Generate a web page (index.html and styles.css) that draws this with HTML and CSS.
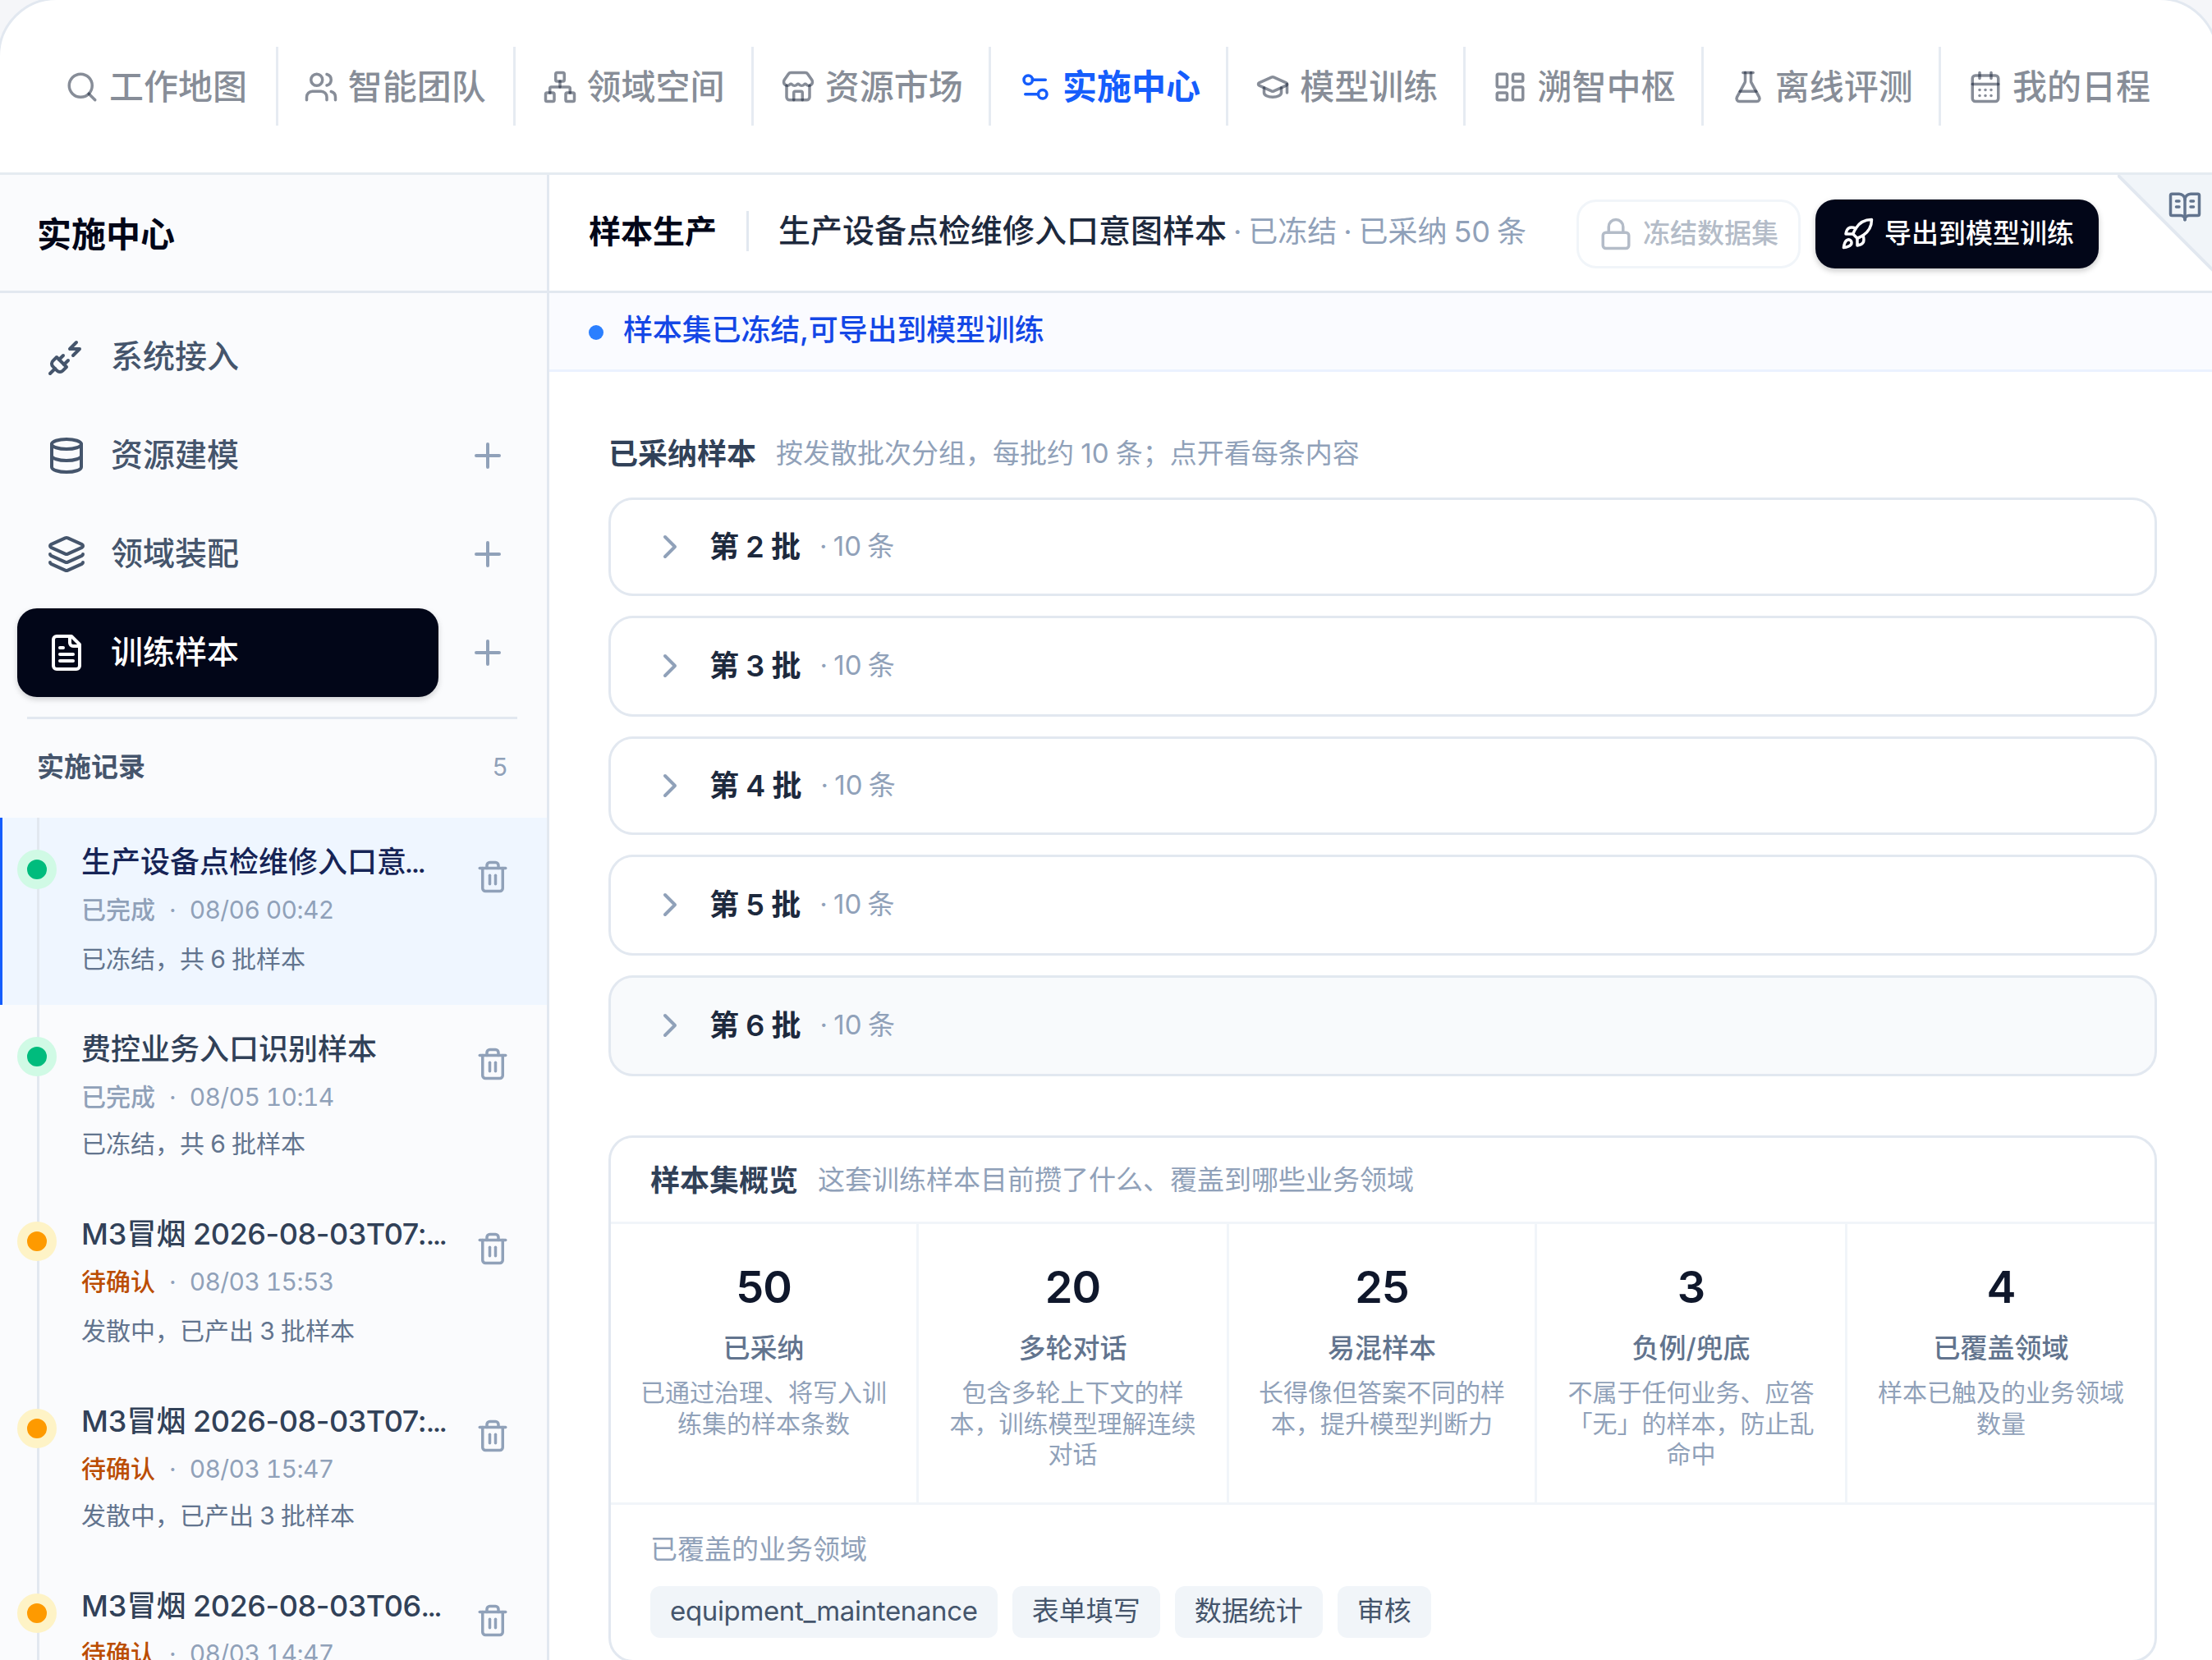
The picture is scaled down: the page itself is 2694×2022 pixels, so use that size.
FILE: index.html
```html
<!DOCTYPE html>
<html lang="zh-CN">
<head>
<meta charset="utf-8">
<title>实施中心</title>
<link rel="stylesheet" href="styles.css">
</head>
<body>
<svg class="sprite" width="0" height="0">
  <symbol id="search" viewBox="0 0 24 24"><path d="m21 21-4.34-4.34"/><circle cx="11" cy="11" r="8"/></symbol>
  <symbol id="users" viewBox="0 0 24 24"><path d="M16 21v-2a4 4 0 0 0-4-4H6a4 4 0 0 0-4 4v2"/><path d="M16 3.128a4 4 0 0 1 0 7.744"/><path d="M22 21v-2a4 4 0 0 0-3-3.87"/><circle cx="9" cy="7" r="4"/></symbol>
  <symbol id="network" viewBox="0 0 24 24"><rect x="16" y="16" width="6" height="6" rx="1"/><rect x="2" y="16" width="6" height="6" rx="1"/><rect x="9" y="2" width="6" height="6" rx="1"/><path d="M5 16v-3a1 1 0 0 1 1-1h12a1 1 0 0 1 1 1v3"/><path d="M12 12V8"/></symbol>
  <symbol id="store" viewBox="0 0 24 24"><path d="M15 21v-5a1 1 0 0 0-1-1h-4a1 1 0 0 0-1 1v5"/><path d="M17.774 10.31a1.12 1.12 0 0 0-1.549 0 2.5 2.5 0 0 1-3.451 0 1.12 1.12 0 0 0-1.548 0 2.5 2.5 0 0 1-3.452 0 1.12 1.12 0 0 0-1.549 0 2.5 2.5 0 0 1-3.77-3.248l2.889-4.184A2 2 0 0 1 7 2h10a2 2 0 0 1 1.653.873l2.895 4.192a2.5 2.5 0 0 1-3.774 3.244"/><path d="M4 10.95V19a2 2 0 0 0 2 2h12a2 2 0 0 0 2-2v-8.05"/></symbol>
  <symbol id="settings" viewBox="0 0 24 24"><path d="M14 17H5"/><path d="M19 7h-9"/><circle cx="17" cy="17" r="3"/><circle cx="7" cy="7" r="3"/></symbol>
  <symbol id="cap" viewBox="0 0 24 24"><path d="M21.42 10.922a1 1 0 0 0-.019-1.838L12.83 5.18a2 2 0 0 0-1.66 0L2.6 9.08a1 1 0 0 0 0 1.832l8.57 3.908a2 2 0 0 0 1.66 0z"/><path d="M22 10v6"/><path d="M6 12.5V16a6 3 0 0 0 12 0v-3.5"/></symbol>
  <symbol id="dashboard" viewBox="0 0 24 24"><rect x="3" y="3" width="7" height="9" rx="1"/><rect x="14" y="3" width="7" height="5" rx="1"/><rect x="14" y="12" width="7" height="9" rx="1"/><rect x="3" y="16" width="7" height="5" rx="1"/></symbol>
  <symbol id="flask" viewBox="0 0 24 24"><path d="M14 2v6a2 2 0 0 0 .245.96l5.51 10.08A2 2 0 0 1 18 22H6a2 2 0 0 1-1.755-2.96l5.51-10.08A2 2 0 0 0 10 8V2"/><path d="M6.453 15h11.094"/><path d="M8.5 2h7"/></symbol>
  <symbol id="calendar" viewBox="0 0 24 24"><path d="M8 2v4"/><path d="M16 2v4"/><rect x="3" y="4" width="18" height="18" rx="2"/><path d="M3 10h18"/><path d="M8 14h.01"/><path d="M12 14h.01"/><path d="M16 14h.01"/><path d="M8 18h.01"/><path d="M12 18h.01"/><path d="M16 18h.01"/></symbol>
  <symbol id="lock" viewBox="0 0 24 24"><rect x="3" y="11" width="18" height="11" rx="2"/><path d="M7 11V7a5 5 0 0 1 10 0v4"/></symbol>
  <symbol id="rocket" viewBox="0 0 24 24"><path d="M4.5 16.5c-1.5 1.26-2 5-2 5s3.74-.5 5-2c.71-.84.7-2.13-.09-2.91a2.18 2.18 0 0 0-2.91-.09z"/><path d="m12 15-3-3a22 22 0 0 1 2-3.95A12.88 12.88 0 0 1 22 2c0 2.72-.78 7.5-6 11a22.35 22.35 0 0 1-4 2z"/><path d="M9 12H4s.55-3.03 2-4c1.62-1.08 5 0 5 0"/><path d="M12 15v5s3.03-.55 4-2c1.08-1.62 0-5 0-5"/></symbol>
  <symbol id="book" viewBox="0 0 24 24"><path d="M12 7v14"/><path d="M16 12h2"/><path d="M16 8h2"/><path d="M3 18a1 1 0 0 1-1-1V4a1 1 0 0 1 1-1h5a4 4 0 0 1 4 4 4 4 0 0 1 4-4h5a1 1 0 0 1 1 1v13a1 1 0 0 1-1 1h-6a3 3 0 0 0-3 3 3 3 0 0 0-3-3z"/><path d="M6 12h2"/><path d="M6 8h2"/></symbol>
  <symbol id="plug" viewBox="0 0 24 24"><path d="M6.3 20.3a2.4 2.4 0 0 0 3.4 0L12 18l-6-6-2.3 2.3a2.4 2.4 0 0 0 0 3.4Z"/><path d="m2 22 3-3"/><path d="M7.5 13.5 10 11"/><path d="M10.5 16.5 13 14"/><path d="m18 3-4 4h6l-4 4"/></symbol>
  <symbol id="database" viewBox="0 0 24 24"><ellipse cx="12" cy="5" rx="9" ry="3"/><path d="M3 5v14a9 3 0 0 0 18 0V5"/><path d="M3 12a9 3 0 0 0 18 0"/></symbol>
  <symbol id="layers" viewBox="0 0 24 24"><path d="M12.83 2.18a2 2 0 0 0-1.66 0L2.6 6.08a1 1 0 0 0 0 1.83l8.58 3.91a2 2 0 0 0 1.66 0l8.58-3.9a1 1 0 0 0 0-1.83z"/><path d="M2 12a1 1 0 0 0 .58.91l8.6 3.91a2 2 0 0 0 1.65 0l8.58-3.9A1 1 0 0 0 22 12"/><path d="M2 17a1 1 0 0 0 .58.91l8.6 3.91a2 2 0 0 0 1.65 0l8.58-3.9A1 1 0 0 0 22 17"/></symbol>
  <symbol id="file" viewBox="0 0 24 24"><path d="M15 2H6a2 2 0 0 0-2 2v16a2 2 0 0 0 2 2h12a2 2 0 0 0 2-2V7Z"/><path d="M14 2v4a2 2 0 0 0 2 2h4"/><path d="M10 9H8"/><path d="M16 13H8"/><path d="M16 17H8"/></symbol>
  <symbol id="plus" viewBox="0 0 24 24"><path d="M5 12h14"/><path d="M12 5v14"/></symbol>
  <symbol id="chevron" viewBox="0 0 24 24"><path d="m9 18 6-6-6-6"/></symbol>
  <symbol id="trash" viewBox="0 0 24 24"><path d="M10 11v6"/><path d="M14 11v6"/><path d="M19 6v14a2 2 0 0 1-2 2H7a2 2 0 0 1-2-2V6"/><path d="M3 6h18"/><path d="M8 6V4a2 2 0 0 1 2-2h4a2 2 0 0 1 2 2v2"/></symbol>
</svg>

<div class="window">
  <nav class="tabs">
    <a class="tab"><svg class="icon"><use href="#search"/></svg>工作地图</a>
    <a class="tab"><svg class="icon"><use href="#users"/></svg>智能团队</a>
    <a class="tab"><svg class="icon"><use href="#network"/></svg>领域空间</a>
    <a class="tab"><svg class="icon"><use href="#store"/></svg>资源市场</a>
    <a class="tab active"><svg class="icon"><use href="#settings"/></svg>实施中心</a>
    <a class="tab"><svg class="icon"><use href="#cap"/></svg>模型训练</a>
    <a class="tab"><svg class="icon"><use href="#dashboard"/></svg>溯智中枢</a>
    <a class="tab"><svg class="icon"><use href="#flask"/></svg>离线评测</a>
    <a class="tab"><svg class="icon"><use href="#calendar"/></svg>我的日程</a>
  </nav>

  <div class="body">
    <aside class="sidebar">
      <h1 class="side-title">实施中心</h1>
      <ul class="menu">
        <li class="menu-row"><a class="menu-item"><svg class="icon lg"><use href="#plug"/></svg>系统接入</a></li>
        <li class="menu-row"><a class="menu-item"><svg class="icon lg"><use href="#database"/></svg>资源建模</a><button class="add"><svg class="icon lg"><use href="#plus"/></svg></button></li>
        <li class="menu-row"><a class="menu-item"><svg class="icon lg"><use href="#layers"/></svg>领域装配</a><button class="add"><svg class="icon lg"><use href="#plus"/></svg></button></li>
        <li class="menu-row"><a class="menu-item active"><svg class="icon lg"><use href="#file"/></svg>训练样本</a><button class="add"><svg class="icon lg"><use href="#plus"/></svg></button></li>
      </ul>
      <div class="records-head"><span>实施记录</span><span class="count">5</span></div>
      <ol class="records">
        <li class="record selected done">
          <i class="dot"></i>
          <div class="record-text">
            <p class="name">生产设备点检维修入口意<span class="more">…</span></p>
            <p class="meta"><b>已完成</b><span>·</span><span class="time">08/06 00:42</span></p>
            <p class="note">已冻结，共 6 批样本</p>
          </div>
          <svg class="icon trash"><use href="#trash"/></svg>
        </li>
        <li class="record done">
          <i class="dot"></i>
          <div class="record-text">
            <p class="name">费控业务入口识别样本</p>
            <p class="meta"><b>已完成</b><span>·</span><span class="time">08/05 10:14</span></p>
            <p class="note">已冻结，共 6 批样本</p>
          </div>
          <svg class="icon trash"><use href="#trash"/></svg>
        </li>
        <li class="record pending">
          <i class="dot"></i>
          <div class="record-text">
            <p class="name">M3冒烟 <span class="stamp">2026-08-03T07:</span><span class="more">…</span></p>
            <p class="meta"><b>待确认</b><span>·</span><span class="time">08/03 15:53</span></p>
            <p class="note">发散中，已产出 3 批样本</p>
          </div>
          <svg class="icon trash"><use href="#trash"/></svg>
        </li>
        <li class="record pending">
          <i class="dot"></i>
          <div class="record-text">
            <p class="name">M3冒烟 <span class="stamp">2026-08-03T07:</span><span class="more">…</span></p>
            <p class="meta"><b>待确认</b><span>·</span><span class="time">08/03 15:47</span></p>
            <p class="note">发散中，已产出 3 批样本</p>
          </div>
          <svg class="icon trash"><use href="#trash"/></svg>
        </li>
        <li class="record pending">
          <i class="dot"></i>
          <div class="record-text">
            <p class="name">M3冒烟 <span class="stamp">2026-08-03T06</span><span class="more">…</span></p>
            <p class="meta"><b>待确认</b><span>·</span><span class="time">08/03 14:47</span></p>
          </div>
          <svg class="icon trash"><use href="#trash"/></svg>
        </li>
      </ol>
    </aside>

    <main class="main">
      <header class="page-head">
        <h2 class="page-title">样本生产</h2>
        <p class="page-sub"><strong>生产设备点检维修入口意图样本</strong><span> · 已冻结 · 已采纳 50 条</span></p>
        <button class="btn ghost"><svg class="icon"><use href="#lock"/></svg>冻结数据集</button>
        <button class="btn solid"><svg class="icon"><use href="#rocket"/></svg>导出到模型训练</button>
        <div class="fold">
          <svg class="fold-shape" viewBox="0 0 120 120"><path class="fold-fill" d="M0 0H120V120Z"/><path class="fold-edge" d="M0 0 120 120"/></svg>
          <svg class="icon fold-icon"><use href="#book"/></svg>
        </div>
      </header>
      <div class="banner"><i class="banner-dot"></i>样本集已冻结,可导出到模型训练</div>

      <div class="content">
        <div class="section-head"><h3>已采纳样本</h3><span>按发散批次分组，每批约 10 条；点开看每条内容</span></div>
        <div class="batches">
          <div class="batch"><svg class="icon lg"><use href="#chevron"/></svg><b>第 2 批</b><span>· 10 条</span></div>
          <div class="batch tall"><svg class="icon lg"><use href="#chevron"/></svg><b>第 3 批</b><span>· 10 条</span></div>
          <div class="batch"><svg class="icon lg"><use href="#chevron"/></svg><b>第 4 批</b><span>· 10 条</span></div>
          <div class="batch tall"><svg class="icon lg"><use href="#chevron"/></svg><b>第 5 批</b><span>· 10 条</span></div>
          <div class="batch tall hover"><svg class="icon lg"><use href="#chevron"/></svg><b>第 6 批</b><span>· 10 条</span></div>
        </div>

        <section class="overview">
          <div class="overview-head section-head"><h3>样本集概览</h3><span>这套训练样本目前攒了什么、覆盖到哪些业务领域</span></div>
          <div class="stats">
            <div class="stat"><b>50</b><em>已采纳</em><p>已通过治理、将写入训练集的样本条数</p></div>
            <div class="stat"><b>20</b><em>多轮对话</em><p>包含多轮上下文的样本，训练模型理解连续对话</p></div>
            <div class="stat"><b>25</b><em>易混样本</em><p>长得像但答案不同的样本，提升模型判断力</p></div>
            <div class="stat"><b>3</b><em>负例/兜底</em><p>不属于任何业务、应答「无」的样本，防止乱命中</p></div>
            <div class="stat"><b>4</b><em>已覆盖领域</em><p>样本已触及的业务领域数量</p></div>
          </div>
          <div class="domains">
            <p>已覆盖的业务领域</p>
            <div class="chips"><span class="code">equipment_maintenance</span><span>表单填写</span><span>数据统计</span><span>审核</span></div>
          </div>
        </section>
      </div>
    </main>
  </div>
</div>
</body>
</html>
```

FILE: styles.css
```css
* { box-sizing: border-box; margin: 0; padding: 0; }

html, body { height: 100%; }

body {
  overflow: hidden;
  background: #f5f6f9;
  color: #1d293d;
  font-family: Inter, "Noto Sans CJK SC", sans-serif;
  font-size: 36px;
}

ul, ol { list-style: none; }
button { border: 0; background: none; font: inherit; color: inherit; }
.sprite { display: none; }

.icon {
  flex: none;
  width: 42px;
  height: 42px;
  fill: none;
  stroke: currentColor;
  stroke-width: 2;
  stroke-linecap: round;
  stroke-linejoin: round;
}
.icon.lg { width: 48px; height: 48px; }

.window {
  display: flex;
  flex-direction: column;
  width: 2705px;
  height: 2100px;
  margin: -3px 0 0 -3px;
  border: 3px solid #e2e8f0;
  border-radius: 72px;
  background: #fff;
  overflow: hidden;
}

/* Top tabs */
.tabs {
  flex: none;
  display: grid;
  grid-template-columns: repeat(9, minmax(0, 1fr));
  align-items: center;
  height: 213px;
  padding: 0 46px 0 50px;
  border-bottom: 3px solid #e5ebf1;
}
.tab {
  display: flex;
  align-items: center;
  justify-content: center;
  gap: 12px;
  height: 96px;
  padding-bottom: 5px;
  border-right: 3px solid #e6ebf2;
  color: rgba(15, 28, 50, .5);
  font-size: 42px;
  font-weight: 500;
}
.tab:nth-child(1) { padding-right: 6px; }
.tab:nth-child(2) { padding-right: 3px; }
.tab:nth-child(n+4) { padding-left: 2px; }
.tab:last-child { border-right-color: transparent; }
.tab .icon { margin-top: 6px; }
.tab.active { color: #155dfc; font-weight: 600; }

.body { flex: 1; display: flex; min-height: 0; }

/* Sidebar */
.sidebar {
  flex: none;
  width: 669px;
  border-right: 3px solid #e2e8f0;
  background: #fafbfd;
}
.side-title {
  height: 144px;
  padding-left: 45px;
  border-bottom: 3px solid #e2e8f0;
  color: #020618;
  font-size: 42px;
  font-weight: 600;
  line-height: 145px;
}
.menu {
  display: flex;
  flex-direction: column;
  gap: 12px;
  margin-top: 24px;
  padding: 0 24px 0 21px;
}
.menu-row { display: flex; gap: 12px; height: 108px; }
.menu-item {
  display: flex;
  align-items: center;
  gap: 30px;
  width: 513px;
  padding: 0 0 8px 36px;
  border-radius: 24px;
  color: #45556c;
  font-size: 39px;
  font-weight: 500;
}
.menu-item .icon { margin-top: 8px; }
.menu-item.active {
  background: #020618;
  color: #fff;
  box-shadow: 0 3px 9px rgba(0, 0, 0, .1), 0 3px 6px rgba(0, 0, 0, .08);
}
.add {
  flex: 1;
  display: flex;
  align-items: center;
  justify-content: center;
  color: #90a1b9;
}
.records-head {
  display: flex;
  align-items: center;
  justify-content: space-between;
  height: 123px;
  margin: 24px 36px 0 33px;
  padding: 0 12px 8px;
  border-top: 3px solid #e2e8f0;
  color: #45556c;
  font-size: 33px;
  font-weight: 600;
}
.records-head .count { margin-top: 4px; color: #90a1b9; font-size: 30px; font-weight: 400; }

.record {
  position: relative;
  display: flex;
  height: 228px;
  padding-left: 21px;
}
.record:nth-child(even) { height: 225px; }
.record::before {
  content: "";
  position: absolute;
  top: 0;
  bottom: 0;
  left: 45px;
  width: 3px;
  background: #e2e8f0;
}
.record.selected { background: #eff6ff; box-shadow: inset 3px 0 #155dfc; }
.dot {
  position: relative;
  flex: none;
  width: 48px;
  height: 48px;
  margin-top: 39px;
  border: 12px solid;
  border-radius: 50%;
}
.done .dot { background: #00bc7d; border-color: #d0fae5; }
.pending .dot { background: #fe9a00; border-color: #fef3c6; }
.record-text { flex: none; width: 510px; padding: 27px 0 0 30px; white-space: nowrap; }
.name { height: 54px; color: #314158; font-weight: 500; line-height: 54px; }
.stamp { margin-left: -1px; letter-spacing: -.45px; }
.more { font-family: Roboto, sans-serif; }
.selected .name { color: #162456; }
.selected .more { margin-left: -2px; }
.meta {
  display: flex;
  gap: 17px;
  margin-top: 9px;
  color: #90a1b9;
  font-size: 30px;
  line-height: 45px;
}
.meta b { font-weight: 500; }
.pending .meta b { color: #bb4d00; }
.time { margin-left: -1px; font-variant-numeric: tabular-nums; letter-spacing: -.6px; }
.note {
  margin-top: 13px;
  color: #62748e;
  font-size: 30px;
  line-height: 48px;
  word-spacing: -1.2px;
}
.record:nth-child(even) .note { margin-top: 10px; }
.trash { margin-top: 51px; color: #90a1b9; }

/* Main column */
.main { flex: 1; min-width: 0; }
.page-head {
  position: relative;
  display: flex;
  align-items: center;
  height: 144px;
  padding: 0 143px 0 48px;
  border-bottom: 3px solid #e2e8f0;
}
.page-title {
  padding-right: 36px;
  color: #020618;
  font-size: 39px;
  font-weight: 600;
  line-height: 48px;
  white-space: nowrap;
}
.page-sub {
  flex: 1;
  padding-left: 36px;
  border-left: 3px solid #e2e8f0;
  color: #90a1b9;
  font-size: 36px;
  line-height: 48px;
  white-space: pre;
  word-spacing: -2.2px;
}
.page-title, .page-sub { margin-bottom: 4px; }
.page-sub strong { color: #1d293d; font-size: 39px; font-weight: 500; }
.btn {
  display: flex;
  align-items: center;
  gap: 12px;
  height: 84px;
  margin-top: 3px;
  border-radius: 24px;
  font-size: 33px;
  font-weight: 500;
  white-space: nowrap;
}
.btn .icon { margin-top: 7px; }
.btn.ghost { padding: 0 24px 7px; border: 3px solid #f1f5f9; color: #b4bcc8; }
.btn.solid {
  margin-left: 18px;
  padding: 0 30px 7px;
  background: #020618;
  color: #fff;
  box-shadow: 0 3px 9px rgba(0, 0, 0, .12), 0 3px 6px rgba(0, 0, 0, .1);
}
.fold { position: absolute; top: 0; right: 0; width: 120px; height: 120px; }
.fold-shape { display: block; width: 120px; height: 120px; }
.fold-fill { fill: #f1f5f9; }
.fold-edge { fill: none; stroke: #e2e8f0; stroke-width: 4; }
.fold-icon { position: absolute; top: 18px; right: 17px; color: #62748e; }

.banner {
  display: flex;
  align-items: center;
  gap: 24px;
  height: 96px;
  padding: 0 48px 9px;
  border-bottom: 3px solid #ebf2ff;
  background: #fafbff;
  color: #1447e6;
  font-weight: 500;
  letter-spacing: -.15px;
}
.banner-dot {
  width: 18px;
  height: 18px;
  margin-top: 11px;
  border-radius: 50%;
  background: #2b7fff;
}

.content { padding: 72px 72px 0; }
.section-head {
  display: flex;
  align-items: center;
  gap: 24px;
  height: 54px;
  padding-bottom: 4px;
}
.section-head h3 { color: #314158; font-size: 36px; font-weight: 600; }
.section-head span { color: #90a1b9; font-size: 33px; word-spacing: -1px; }

.batches { display: flex; flex-direction: column; gap: 24px; margin-top: 27px; }
.batch {
  display: flex;
  align-items: center;
  gap: 24px;
  height: 120px;
  padding: 0 48px 7px;
  border: 3px solid #e2e8f0;
  border-radius: 30px;
}
.batch.tall { height: 123px; }
.batch.hover { background: #f8fafc; }
.batch .icon { margin-top: 6px; color: #90a1b9; }
.batch b { color: #1d293d; font-weight: 600; word-spacing: -.8px; }
.batch span { margin-left: -1px; color: #90a1b9; font-size: 33px; word-spacing: -2px; }

.overview {
  height: 642px;
  margin-top: 72px;
  border: 3px solid #e2e8f0;
  border-radius: 30px;
}
.overview-head { height: 105px; padding: 0 48px 4px; border-bottom: 3px solid #f1f5f9; }
.stats {
  display: grid;
  grid-template-columns: 375px 378px 375px 378px 1fr;
  height: 342px;
  border-bottom: 3px solid #f1f5f9;
}
.stat {
  display: flex;
  flex-direction: column;
  align-items: center;
  padding: 44px 35px 0;
  border-right: 3px solid #f1f5f9;
  text-align: center;
}
.stat:last-child { border-right: 0; }
.stat b {
  color: #0f172b;
  font-size: 54px;
  font-weight: 600;
  line-height: 66px;
  letter-spacing: -1px;
}
.stat em {
  margin-top: 17px;
  color: #62748e;
  font-size: 33px;
  font-style: normal;
  font-weight: 500;
  line-height: 48px;
}
.stat p { margin-top: 12px; color: #90a1b9; font-size: 30px; line-height: 37.5px; }

.domains { padding: 30px 48px 0; }
.domains p { color: #90a1b9; font-size: 33px; line-height: 48px; }
.chips { display: flex; gap: 18px; margin-top: 21px; }
.chips span {
  height: 63px;
  padding: 0 24px;
  border-radius: 12px;
  background: #f1f5f9;
  color: #45556c;
  font-size: 33px;
  line-height: 61px;
}
.chips .code { letter-spacing: -.35px; }
```
